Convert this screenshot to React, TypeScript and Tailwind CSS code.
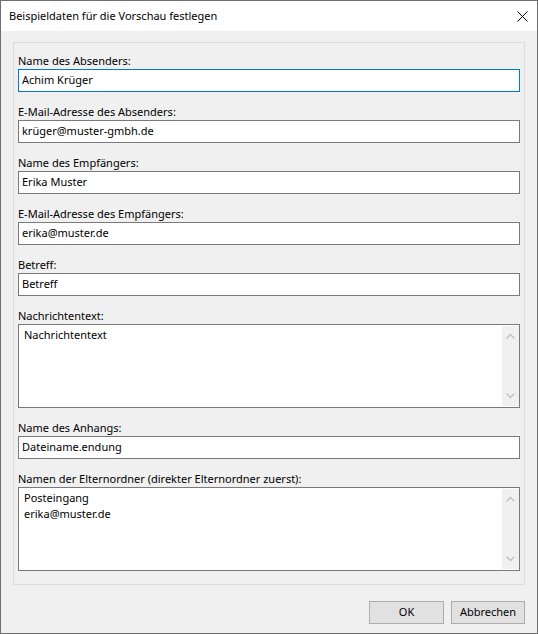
const FONT = "font-['Noto_Sans','Open_Sans',sans-serif]";

type Field = {
  label: string;
  value: string;
  multiline?: boolean;
  focused?: boolean;
};

const FIELDS: Field[] = [
  { label: 'Name des Absenders:', value: 'Achim Krüger', focused: true },
  { label: 'E-Mail-Adresse des Absenders:', value: 'krüger@muster-gmbh.de' },
  { label: 'Name des Empfängers:', value: 'Erika Muster' },
  { label: 'E-Mail-Adresse des Empfängers:', value: 'erika@muster.de' },
  { label: 'Betreff:', value: 'Betreff' },
  { label: 'Nachrichtentext:', value: 'Nachrichtentext', multiline: true },
  { label: 'Name des Anhangs:', value: 'Dateiname.endung' },
  { label: 'Namen der Elternordner (direkter Elternordner zuerst):', value: 'Posteingang\nerika@muster.de', multiline: true },
];

function Chevron({ up }: { up?: boolean }) {
  return (
    <svg width="9" height="6" viewBox="0 0 9 6" className="block">
      <path
        d={up ? 'M0.5 5.5 L4.5 1.5 L8.5 5.5' : 'M0.5 0.5 L4.5 4.5 L8.5 0.5'}
        stroke="#c0c0c0"
        strokeWidth="1.3"
        fill="none"
      />
    </svg>
  );
}

function TextBox({ field }: { field: Field }) {
  if (field.multiline) {
    return (
      <div className="w-[502px] h-[84px] border border-[#7a7a7a] bg-white flex">
        <div className="flex-1 pl-[5px] pt-[2px] text-[11px] leading-[16px] text-black whitespace-pre-line">
          {field.value}
        </div>
        <div className="w-[17px] my-[1px] bg-[#f0f0f0] flex flex-col items-center justify-between py-[7px]">
          <Chevron up />
          <Chevron />
        </div>
      </div>
    );
  }
  return (
    <div
      className={`w-[502px] h-[23px] border bg-white flex items-center pl-[3px] text-[11px] text-black ${
        field.focused ? 'border-[#0078d7]' : 'border-[#7a7a7a]'
      }`}
    >
      {field.value}
    </div>
  );
}

export default function App() {
  return (
    <div className={`w-[538px] h-[634px] border border-[#6f6f6f] bg-[#f0f0f0] flex flex-col ${FONT}`}>
      <div className="h-[30px] bg-white flex items-center justify-between pl-[8px] pr-[9px]">
        <span className="text-[11px] text-black">Beispieldaten für die Vorschau festlegen</span>
        <svg width="11" height="11" viewBox="0 0 11 11">
          <path d="M0.5 0.5 L10.5 10.5 M10.5 0.5 L0.5 10.5" stroke="#000" strokeWidth="1" />
        </svg>
      </div>

      <div className="mt-[11px] ml-[12px] w-[512px] border border-[#dcdcdc] pt-[10px] pb-[13px] pl-[4px] flex flex-col gap-[12px]">
        {FIELDS.map((f) => (
          <div key={f.label} className="flex flex-col">
            <div className="h-[16px] leading-[15px] text-[11px] text-black">{f.label}</div>
            <TextBox field={f} />
          </div>
        ))}
      </div>

      <div className="flex justify-end gap-[7px] mt-[16px] pr-[12px]">
        <button className="w-[75px] h-[23px] bg-[#e1e1e1] border border-[#adadad] text-[11px] text-black">OK</button>
        <button className="w-[74px] h-[23px] bg-[#e1e1e1] border border-[#adadad] text-[11px] text-black">Abbrechen</button>
      </div>
    </div>
  );
}
